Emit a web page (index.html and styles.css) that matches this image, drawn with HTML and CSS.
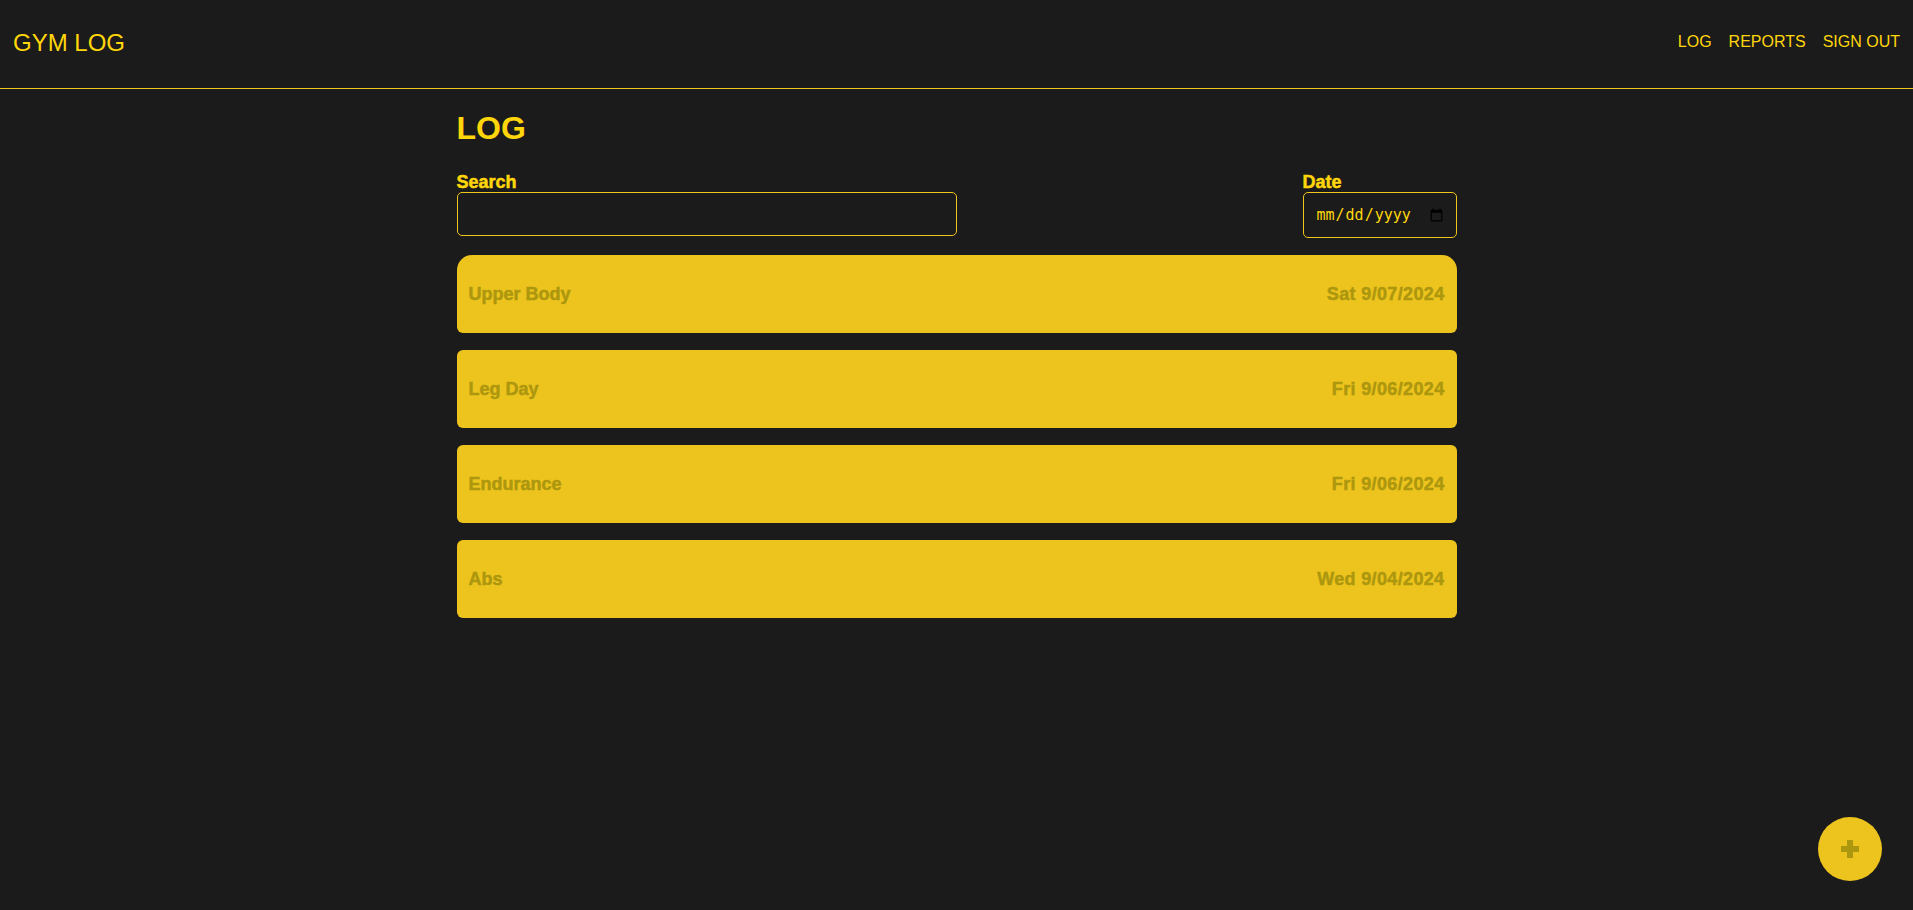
FILE: index.html
```html
<!DOCTYPE html>
<html lang="en">
<head>
<meta charset="utf-8">
<title>Gym Log</title>
<link rel="stylesheet" href="styles.css">
</head>
<body>
<header class="topbar">
  <div class="brand">GYM LOG</div>
  <nav class="nav">
    <a class="nav-link" href="#">LOG</a>
    <a class="nav-link" href="#">REPORTS</a>
    <a class="nav-link" href="#">SIGN OUT</a>
  </nav>
</header>
<main class="content">
  <h1 class="title">LOG</h1>
  <div class="filters">
    <label class="field field-search">
      <span class="field-label">Search</span>
      <input class="search-input" type="text">
    </label>
    <label class="field field-date">
      <span class="field-label">Date</span>
      <input class="date-input" type="date">
    </label>
  </div>
  <ul class="entries">
    <li class="entry entry-active"><span class="entry-name">Upper Body</span><span class="entry-date">Sat 9/07/2024</span></li>
    <li class="entry"><span class="entry-name">Leg Day</span><span class="entry-date">Fri 9/06/2024</span></li>
    <li class="entry"><span class="entry-name">Endurance</span><span class="entry-date">Fri 9/06/2024</span></li>
    <li class="entry"><span class="entry-name">Abs</span><span class="entry-date">Wed 9/04/2024</span></li>
  </ul>
</main>
<button class="fab" type="button" aria-label="Add">
  <svg width="18" height="18" viewBox="0 0 18 18"><rect x="6" y="0" width="6" height="18" fill="#ad970f"/><rect x="0" y="6" width="18" height="6" fill="#ad970f"/></svg>
</button>
</body>
</html>
```
FILE: styles.css
```css
* { box-sizing: border-box; }
html, body { margin: 0; padding: 0; }
body {
  background: #1b1b1b;
  color: #ffd60a;
  font-family: "Liberation Sans", Arial, sans-serif;
  min-height: 910px;
}
.topbar {
  height: 89px;
  border-bottom: 1px solid #efc41d;
  display: flex;
  align-items: center;
  justify-content: space-between;
  padding: 0 13px 0 13px;
}
.brand {
  font-size: 24px;
  color: #ffd60a;
  margin-top: -3px;
}
.nav {
  display: flex;
  gap: 17px;
  margin-top: -4px;
}
.nav-link {
  color: #ffd60a;
  text-decoration: none;
  font-size: 16px;
}
.content {
  width: 1000px;
  margin: 0 auto;
  padding-top: 19px;
}
.title {
  margin: 0;
  font-size: 32px;
  font-weight: bold;
  line-height: 40px;
  color: #ffd60a;
}
.filters {
  display: flex;
  justify-content: space-between;
  align-items: flex-start;
  margin-top: 24px;
}
.field {
  display: flex;
  flex-direction: column;
}
.field-label {
  font-size: 18px;
  font-weight: bold;
  line-height: 20px;
  color: #ffd60a;
  -webkit-text-stroke: 0.5px #ffd60a;
}
.search-input {
  width: 500px;
  height: 44px;
  background: transparent;
  border: 1px solid #efc41d;
  border-radius: 5px;
  color: #ffd60a;
  font-size: 16px;
  padding: 0 12px;
  outline: none;
}
.date-input {
  width: 154px;
  height: 46px;
  background: transparent;
  border: 1px solid #efc41d;
  border-radius: 5px;
  color: #ffd60a;
  font-family: "DejaVu Sans Mono", monospace;
  font-size: 15px;
  padding: 0 10px 0 12px;
  outline: none;
  color-scheme: light;
}
.entries {
  list-style: none;
  margin: 17px 0 0 0;
  padding: 0;
  display: flex;
  flex-direction: column;
  gap: 17px;
}
.entry {
  height: 78px;
  background: #edc41d;
  border-radius: 6px;
  display: flex;
  align-items: center;
  justify-content: space-between;
  padding: 0 12px;
  color: #ad970f;
  font-size: 18px;
  font-weight: bold;
  -webkit-text-stroke: 0.5px #ad970f;
}
.entry-date {
  letter-spacing: 0.35px;
}
.entry-active {
  border-radius: 15px 15px 6px 6px;
}
.fab {
  position: fixed;
  right: 31px;
  bottom: 29px;
  width: 64px;
  height: 64px;
  border-radius: 50%;
  border: none;
  background: #edc41d;
  display: flex;
  align-items: center;
  justify-content: center;
  padding: 0;
  cursor: pointer;
}
```
